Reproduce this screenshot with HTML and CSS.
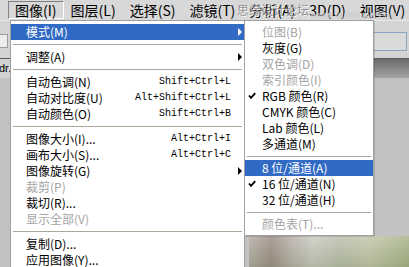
FILE: index.html
```html
<!DOCTYPE html>
<html lang="zh-CN">
<head>
    <meta charset="UTF-8">
    <title>图像菜单 - 模式</title>
    <link rel="stylesheet" href="styles.css">
</head>
<body>
    <div class="app">
        <!-- Menu bar -->
        <div class="menubar">
            <div class="menubar-item open">图像(I)</div>
            <div class="menubar-item">图层(L)</div>
            <div class="menubar-item">选择(S)</div>
            <div class="menubar-item">滤镜(T)</div>
            <div class="menubar-item">分析(A)</div>
            <div class="menubar-item">3D(D)</div>
            <div class="menubar-item">视图(V)</div>
        </div>
        <div class="watermark">思缘设计论坛</div>
        <div class="watermark-url">www.missyuan.com</div>

        <!-- Workspace behind the menus -->
        <div class="optionsbar">
            <div class="opt-box"></div>
            <div class="opt-input"></div>
        </div>
        <div class="tabbar">
            <div class="doc-tab">dr.jpg @ 100%</div>
        </div>
        <div class="canvas-area">
            <div class="photo"></div>
        </div>

        <!-- Image menu -->
        <div class="menu menu-main">
            <div class="menu-item active has-sub"><span class="label">模式(M)</span></div>
            <div class="separator"></div>
            <div class="menu-item has-sub"><span class="label">调整(A)</span></div>
            <div class="separator"></div>
            <div class="menu-item"><span class="label">自动色调(N)</span><span class="shortcut">Shift+Ctrl+L</span></div>
            <div class="menu-item"><span class="label">自动对比度(U)</span><span class="shortcut">Alt+Shift+Ctrl+L</span></div>
            <div class="menu-item"><span class="label">自动颜色(O)</span><span class="shortcut">Shift+Ctrl+B</span></div>
            <div class="separator"></div>
            <div class="menu-item"><span class="label">图像大小(I)...</span><span class="shortcut">Alt+Ctrl+I</span></div>
            <div class="menu-item"><span class="label">画布大小(S)...</span><span class="shortcut">Alt+Ctrl+C</span></div>
            <div class="menu-item has-sub"><span class="label">图像旋转(G)</span></div>
            <div class="menu-item disabled"><span class="label">裁剪(P)</span></div>
            <div class="menu-item"><span class="label">裁切(R)...</span></div>
            <div class="menu-item disabled"><span class="label">显示全部(V)</span></div>
            <div class="separator"></div>
            <div class="menu-item"><span class="label">复制(D)...</span></div>
            <div class="menu-item"><span class="label">应用图像(Y)...</span></div>
        </div>

        <!-- Mode submenu -->
        <div class="menu menu-sub">
            <div class="menu-item disabled"><span class="label">位图(B)</span></div>
            <div class="menu-item"><span class="label">灰度(G)</span></div>
            <div class="menu-item disabled"><span class="label">双色调(D)</span></div>
            <div class="menu-item disabled"><span class="label">索引颜色(I)</span></div>
            <div class="menu-item checked">
                <svg class="check" width="8" height="8" viewBox="0 0 8 8"><path d="M1 3.5 L3 5.8 L7.2 1.2" fill="none" stroke="#000" stroke-width="1.8"/></svg>
                <span class="label">RGB 颜色(R)</span>
            </div>
            <div class="menu-item"><span class="label">CMYK 颜色(C)</span></div>
            <div class="menu-item"><span class="label">Lab 颜色(L)</span></div>
            <div class="menu-item"><span class="label">多通道(M)</span></div>
            <div class="separator"></div>
            <div class="menu-item active"><span class="label">8 位/通道(A)</span></div>
            <div class="menu-item checked">
                <svg class="check" width="8" height="8" viewBox="0 0 8 8"><path d="M1 3.5 L3 5.8 L7.2 1.2" fill="none" stroke="#000" stroke-width="1.8"/></svg>
                <span class="label">16 位/通道(N)</span>
            </div>
            <div class="menu-item"><span class="label">32 位/通道(H)</span></div>
            <div class="separator"></div>
            <div class="menu-item disabled"><span class="label">颜色表(T)...</span></div>
        </div>
    </div>
</body>
</html>
```

FILE: styles.css
```css
* {
    margin: 0;
    padding: 0;
    box-sizing: border-box;
}

body {
    width: 409px;
    height: 267px;
    overflow: hidden;
    font-family: "Noto Sans CJK SC", "Liberation Sans", sans-serif;
    font-size: 12px;
    color: #000;
    background: #c0c0c0;
}

.app {
    position: relative;
    height: 267px;
    overflow: hidden;
}

/* Menu bar */
.menubar {
    display: flex;
    height: 20px;
    padding: 1px 0 0 8px;
    background: #d8d8d8;
    font-size: 14px;
    line-height: 17px;
}

.menubar-item {
    flex: none;
    padding: 0 6px;
    height: 18px;
    border: 1px solid transparent;
    white-space: nowrap;
}

.menubar-item.open {
    border-color: #808080 #fff #fff #808080;
}

.watermark {
    position: absolute;
    left: 237px;
    top: 3px;
    font-size: 12px;
    line-height: 14px;
    color: rgba(110, 110, 110, 0.7);
    text-shadow: 1px 1px 0 rgba(255, 255, 255, 0.8);
}

.watermark-url {
    position: absolute;
    left: 311px;
    top: 12px;
    font-family: "Liberation Sans", sans-serif;
    font-size: 7px;
    line-height: 8px;
    letter-spacing: 0.6px;
    text-transform: uppercase;
    color: rgba(255, 255, 255, 0.85);
    text-shadow: 0 0 1px #777;
}

/* Workspace */
.optionsbar {
    display: flex;
    justify-content: space-between;
    align-items: center;
    height: 38px;
    padding-top: 3px;
    background: #d4d4d4;
    border-top: 1px solid #e6e6e6;
}

.opt-box {
    width: 9px;
    height: 14px;
    margin-left: -1px;
    background: #ececec;
    border: 1px solid #9c9c9c;
}

.opt-input {
    width: 34px;
    height: 19px;
    margin-right: 2px;
    background: #dadada;
    border: 1px solid #8aa4c4;
}

.tabbar {
    height: 20px;
    background: linear-gradient(#6a6a6a, #a4a4a4);
    border-top: 1px solid #5a5a5a;
}

.doc-tab {
    width: 90px;
    height: 19px;
    margin-left: -1px;
    padding-top: 1px;
    background: #d2d2d2;
    font-family: "Liberation Sans", sans-serif;
    font-size: 11px;
    line-height: 16px;
    white-space: nowrap;
}

.canvas-area {
    display: flex;
    justify-content: flex-end;
    height: 189px;
    padding-top: 158px;
    background: #c2c2c2;
}

.photo {
    width: 160px;
    height: 31px;
    background:
        linear-gradient(rgba(255, 255, 255, 0.15), rgba(90, 110, 60, 0.2)),
        linear-gradient(90deg, #b4aca6 0%, #9e8e86 14%, #b8b0aa 26%, #cbcbc2 40%, #bcc0ae 58%, #c6c8ae 74%, #a8b48a 100%);
}

/* Drop-down menus */
.menu {
    position: absolute;
    top: 20px;
    padding: 3px 0;
    background: #fff;
    border: 1px solid #a0a0a0;
}

.menu-main {
    left: 10px;
    width: 235px;
}

.menu-sub {
    left: 244px;
    width: 130px;
    box-shadow: 1px 1px 0 rgba(0, 0, 0, 0.12);
}

.menu-item {
    position: relative;
    display: flex;
    align-items: center;
    height: 16px;
    padding: 0 13px 0 15px;
    line-height: 16px;
    white-space: nowrap;
}

.menu-sub .menu-item {
    padding-left: 17px;
}

.label {
    flex: 1;
}

.shortcut {
    font-family: "Liberation Mono", monospace;
    font-size: 10px;
}

.menu-item.active {
    background: #316ac5;
    color: #fff;
}

.menu-item.disabled {
    color: #a4a4a4;
}

.has-sub::after {
    content: "";
    position: absolute;
    right: 2px;
    top: 4px;
    border-left: 4px solid #000;
    border-top: 4px solid transparent;
    border-bottom: 4px solid transparent;
}

.has-sub.active::after {
    border-left-color: #fff;
}

.check {
    position: absolute;
    left: 3px;
    top: 4px;
}

.separator {
    height: 1px;
    margin: 4px 2px;
    background: #aca899;
}

.menu-sub .separator {
    margin: 4px 2px 3px;
}
```
